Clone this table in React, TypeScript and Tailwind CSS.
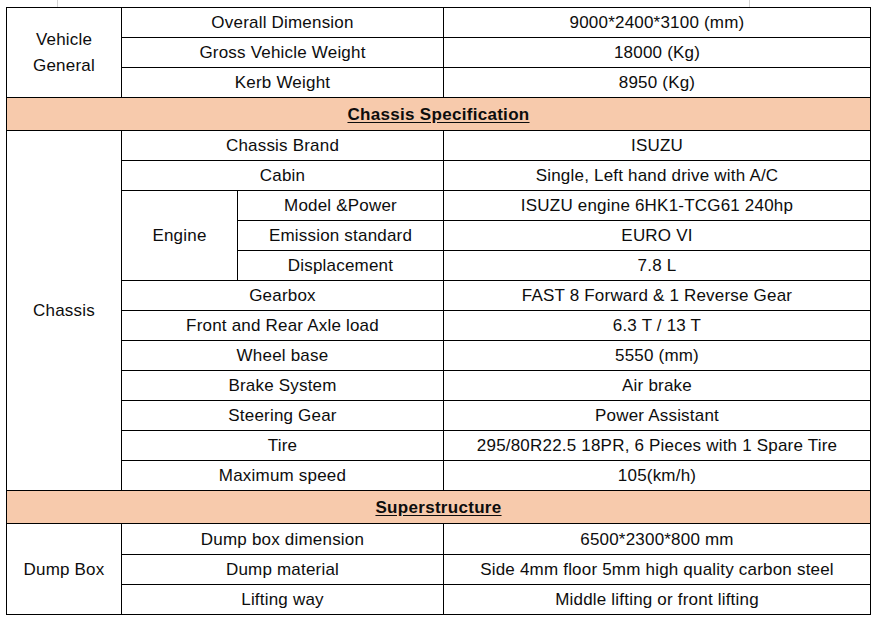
const cell = 'border border-black text-center align-middle p-0';

type Row = { label: string; value: string };

const chassisTop: Row[] = [
  { label: 'Chassis Brand', value: 'ISUZU' },
  { label: 'Cabin', value: 'Single, Left hand drive with A/C' },
];

const engineRows: Row[] = [
  { label: 'Model &Power', value: 'ISUZU engine 6HK1-TCG61 240hp' },
  { label: 'Emission standard', value: 'EURO VI' },
  { label: 'Displacement', value: '7.8 L' },
];

const chassisRest: Row[] = [
  { label: 'Gearbox', value: 'FAST 8 Forward & 1 Reverse Gear' },
  { label: 'Front and Rear Axle load', value: '6.3 T / 13 T' },
  { label: 'Wheel base', value: '5550 (mm)' },
  { label: 'Brake System', value: 'Air brake' },
  { label: 'Steering Gear', value: 'Power Assistant' },
  { label: 'Tire', value: '295/80R22.5 18PR, 6 Pieces with 1 Spare Tire' },
  { label: 'Maximum speed', value: '105(km/h)' },
];

const dumpRows: Row[] = [
  { label: 'Dump box dimension', value: '6500*2300*800 mm' },
  { label: 'Dump material', value: 'Side 4mm floor 5mm high quality carbon steel' },
  { label: 'Lifting way', value: 'Middle lifting or front lifting' },
];

const SectionHeader = ({ title }: { title: string }) => (
  <tr className="h-[33px] bg-[#f7caac]">
    <td colSpan={4} className={cell}>
      <span className="font-bold underline underline-offset-2 tracking-[0.3px]">{title}</span>
    </td>
  </tr>
);

export default function App() {
  return (
    <main className="w-[873px] h-[618px] bg-white text-[17px] leading-[19px] tracking-[0.2px] text-[#0d0d0d] font-['Liberation_Sans',Arial,sans-serif]">
      <div className="flex h-[7px]">
        <div className="ml-[57px] w-[693px] border-l border-r border-[#d4d4d4]" />
      </div>
      <table className="ml-[6px] w-[864px] border-collapse table-fixed">
        <colgroup>
          <col className="w-[115px]" />
          <col className="w-[116px]" />
          <col className="w-[206px]" />
          <col className="w-[427px]" />
        </colgroup>
        <tbody>
          <tr className="h-[30px]">
            <td rowSpan={3} className={`${cell} leading-[26px]`}>
              Vehicle
              <br />
              General
            </td>
            <td colSpan={2} className={cell}>Overall Dimension</td>
            <td className={cell}>9000*2400*3100 (mm)</td>
          </tr>
          <tr className="h-[30px]">
            <td colSpan={2} className={cell}>Gross Vehicle Weight</td>
            <td className={cell}>18000 (Kg)</td>
          </tr>
          <tr className="h-[30px]">
            <td colSpan={2} className={cell}>Kerb Weight</td>
            <td className={cell}>8950 (Kg)</td>
          </tr>

          <SectionHeader title="Chassis Specification" />

          {chassisTop.map((r, i) => (
            <tr key={r.label} className="h-[30px]">
              {i === 0 && (
                <td rowSpan={12} className={cell}>Chassis</td>
              )}
              <td colSpan={2} className={cell}>{r.label}</td>
              <td className={cell}>{r.value}</td>
            </tr>
          ))}
          {engineRows.map((r, i) => (
            <tr key={r.label} className="h-[30px]">
              {i === 0 && (
                <td rowSpan={3} className={cell}>Engine</td>
              )}
              <td className={cell}>{r.label}</td>
              <td className={cell}>{r.value}</td>
            </tr>
          ))}
          {chassisRest.map((r) => (
            <tr key={r.label} className="h-[30px]">
              <td colSpan={2} className={cell}>{r.label}</td>
              <td className={cell}>{r.value}</td>
            </tr>
          ))}

          <SectionHeader title="Superstructure" />

          {dumpRows.map((r, i) => (
            <tr key={r.label} className={i === 0 ? 'h-[31px]' : 'h-[30px]'}>
              {i === 0 && (
                <td rowSpan={3} className={cell}>Dump Box</td>
              )}
              <td colSpan={2} className={cell}>{r.label}</td>
              <td className={cell}>{r.value}</td>
            </tr>
          ))}
        </tbody>
      </table>
    </main>
  );
}
